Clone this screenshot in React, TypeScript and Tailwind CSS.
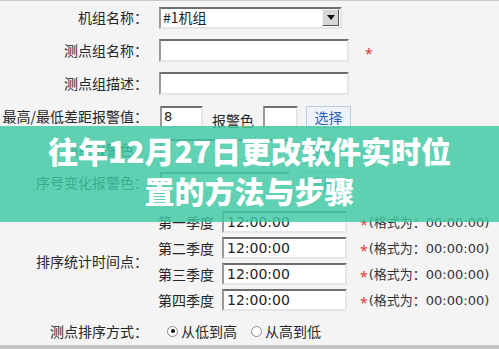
const cjk = { fontFamily: '"Noto Sans CJK SC", "Noto Sans", sans-serif' };
const num = { fontFamily: '"DejaVu Sans", "Noto Sans CJK SC", sans-serif' };

const inset =
  'bg-white border-2 border-t-[#6e6e6e] border-l-[#9a9a9a] border-r-[#e6e6e6] border-b-[#e6e6e6]';

const Star = () => <span className="text-[#e23a3a] text-[14px] leading-none">*</span>;

const Label = ({ children }: { children: React.ReactNode }) => (
  <div className="w-[150px] pr-[2px] text-right text-[14px] text-[#262626]" style={cjk}>
    {children}
  </div>
);

const PickButton = () => (
  <button
    className="h-[22px] w-[45px] border border-[#b9cde4] bg-[#eef3f9] text-[14px] leading-none text-[#2f62b8]"
    style={cjk}
  >
    选择
  </button>
);

const quarters = ['第一季度', '第二季度', '第三季度', '第四季度'];

const App = () => {
  return (
    <div className="relative w-[499px] h-[349px] overflow-hidden bg-[#f4f4f4]">
      <div className="h-[1px] bg-[#c9c9c9]" />

      {/* 机组名称 */}
      <div className="flex items-center h-[33px]">
        <Label>机组名称：</Label>
        <div className={`ml-[9px] flex items-center h-[22px] w-[183px] ${inset}`}>
          <span className="flex-1 pl-[2px] text-[14px] text-[#222]" style={cjk}>
            #1机组
          </span>
          <span className="flex items-center justify-center w-[17px] h-[17px] mr-[1px] bg-[#d6d6d6] border border-t-[#f4f4f4] border-l-[#f4f4f4] border-r-[#555] border-b-[#555]">
            <svg width="8" height="5" viewBox="0 0 8 5">
              <path d="M0 0h8L4 5z" fill="#111" />
            </svg>
          </span>
        </div>
      </div>

      {/* 测点组名称 */}
      <div className="flex items-center h-[33px]">
        <Label>测点组名称：</Label>
        <div className={`ml-[9px] h-[23px] w-[190px] ${inset}`} />
        <span className="ml-[16px] mt-[4px]">
          <Star />
        </span>
      </div>

      {/* 测点组描述 */}
      <div className="flex items-center h-[33px]">
        <Label>测点组描述：</Label>
        <div className={`ml-[9px] h-[23px] w-[190px] ${inset}`} />
      </div>

      {/* 最高/最低差距报警值 */}
      <div className="flex items-center h-[33px]">
        <Label>最高/最低差距报警值：</Label>
        <div className={`ml-[10px] h-[22px] w-[43px] flex items-center pl-[2px] text-[13px] text-[#222] ${inset}`} style={num}>
          8
        </div>
        <span className="ml-[9px] mt-[7px] text-[14px] text-[#262626]" style={cjk}>
          报警色
        </span>
        <div className={`ml-[9px] h-[22px] w-[35px] ${inset}`} />
        <div className="ml-[8px]">
          <PickButton />
        </div>
      </div>

      {/* 报警色 rows (under banner) */}
      <div className="flex items-center h-[33px]">
        <Label>测点报警色：</Label>
        <div className={`ml-[10px] h-[22px] w-[130px] ${inset}`} />
        <div className="ml-[13px]">
          <PickButton />
        </div>
      </div>
      <div className="flex items-center h-[33px]">
        <Label>序号变化报警色：</Label>
        <div className={`ml-[10px] h-[22px] w-[130px] ${inset}`} />
        <div className="ml-[10px]">
          <PickButton />
        </div>
      </div>

      {/* 排序统计时间点 */}
      <div className="flex items-center mt-[10px]">
        <Label>排序统计时间点：</Label>
        <div className="flex flex-col">
          {quarters.map((q) => (
            <div key={q} className="flex items-center h-[26px]">
              <span className="ml-[8px] w-[56px] text-[14px] text-[#262626]" style={cjk}>
                {q}
              </span>
              <div
                className={`ml-[8px] h-[22px] w-[125px] flex items-center pl-[3px] text-[14px] text-[#222] ${inset}`}
                style={num}
              >
                12:00:00
              </div>
              <span className="ml-[13px] mt-[4px]">
                <Star />
              </span>
              <span className="ml-[1px] text-[13px] text-[#333]" style={num}>
                (<span style={cjk}>格式为：</span>00:00:00)
              </span>
            </div>
          ))}
        </div>
      </div>

      {/* 测点排序方式 */}
      <div className="flex items-center h-[28px] mt-[4px]">
        <Label>测点排序方式：</Label>
        <span className="ml-[17px] flex items-center justify-center w-[11px] h-[11px] rounded-full border border-[#888] bg-white">
          <span className="w-[4px] h-[4px] rounded-full bg-[#111]" />
        </span>
        <span className="ml-[3px] text-[14px] text-[#262626]" style={cjk}>
          从低到高
        </span>
        <span className="ml-[14px] w-[11px] h-[11px] rounded-full border border-[#888] bg-white" />
        <span className="ml-[3px] text-[14px] text-[#262626]" style={cjk}>
          从高到低
        </span>
      </div>

      <div className="absolute left-0 right-0 bottom-0 h-[4px] bg-[#c4c4c4]" />

      {/* Banner */}
      <div className="absolute left-0 right-0 top-[126px] h-[96px] bg-[rgba(62,201,164,0.82)] pt-[4px] text-center">
        <div className="text-[30px] leading-[40px] font-black text-white" style={cjk}>
          往年12月27日更改软件实时位
        </div>
        <div className="text-[30px] leading-[40px] font-black text-white" style={cjk}>
          置的方法与步骤
        </div>
      </div>
    </div>
  );
};

export default App;
